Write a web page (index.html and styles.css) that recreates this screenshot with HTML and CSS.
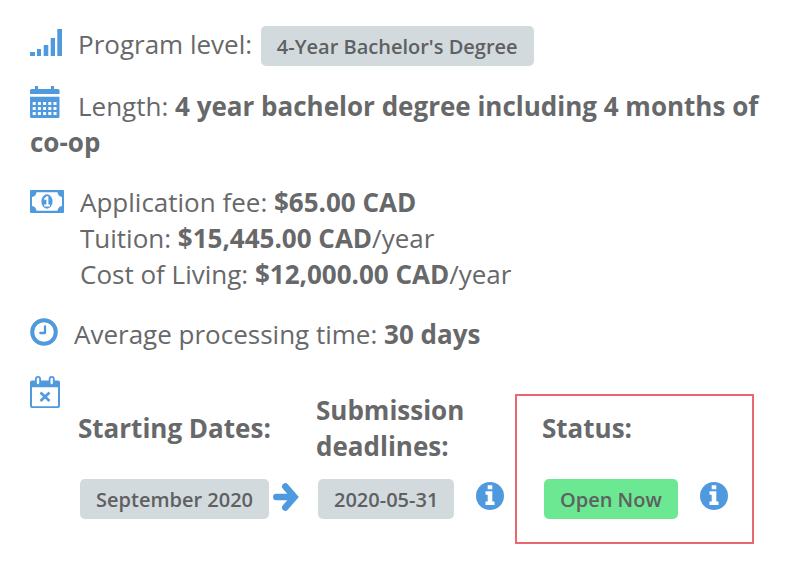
FILE: index.html
```
<!DOCTYPE html>
<html lang="en">
<head>
    <meta charset="UTF-8">
    <meta name="viewport" content="width=device-width, initial-scale=1.0">
    <title>Program Details</title>
    <link rel="stylesheet" href="styles.css">
</head>
<body>
    <!-- Shared icon -->
    <svg class="sprite" aria-hidden="true">
        <symbol id="icon-info" viewBox="0 0 28 28">
            <circle cx="14" cy="14" r="14" fill="#4f9adf"/>
            <path fill="#fff" d="M11.7 3.3h4.6v4h-4.6zM9.5 9.3h6.8v10.2h2.2v3.4h-9v-3.4h2.2v-6.8H9.5z"/>
        </symbol>
    </svg>

    <main class="program">
        <!-- Program level -->
        <p class="detail">
            <svg class="icon icon-signal" viewBox="0 0 32 27" aria-hidden="true">
                <path d="M0 23h5v4H0zM7 20h4v7H7zM13.7 16h4.6v11h-4.6zM20.7 9H25v18h-4.300zM27.300 0H32v27h-4.700z"/>
            </svg>Program level: <span class="badge badge-level">4-Year Bachelor's Degree</span>
        </p>

        <!-- Length -->
        <p class="detail">
            <svg class="icon icon-calendar" viewBox="0 0 30 32" aria-hidden="true">
                <path fill-rule="evenodd" d="M5 0h3v3h13V0h3v3h4q1.500 0 1.500 1.500V8H0V4.500Q0 3 1.500 3H5zM0 10.700h29.500V30.500q0 1.500-1.500 1.500H1.500Q0 32 0 30.500zM2.700 16v3h3v-3zm5.200 0v3h3v-3zm5.200 0v3h3v-3zm5.200 0v3h3v-3zm5.200 0v3h3v-3zM2.700 21v3h3v-3zm5.200 0v3h3v-3zm5.200 0v3h3v-3zm5.200 0v3h3v-3zm5.200 0v3h3v-3zM2.700 26v3h3v-3zm5.200 0v3h3v-3zm5.200 0v3h3v-3zm5.200 0v3h3v-3zm5.200 0v3h3v-3z"/>
            </svg>Length: <strong>4 year bachelor degree including 4 months of co-op</strong>
        </p>

        <!-- Costs -->
        <div class="detail costs">
            <svg class="icon icon-money" viewBox="0 0 34 23" aria-hidden="true">
                <path fill-rule="evenodd" d="M1 0h32q1 0 1 1v21q0 1-1 1H1q-1 0-1-1V1q0-1 1-1zM6.500 2.300Q6 6.300 2 7v9q4 .700 4.500 4.700h21Q28 16.700 32 16V7q-4-.700-4.500-4.700z"/>
                <ellipse cx="17" cy="11.500" rx="5.600" ry="7.200"/>
                <path fill="none" stroke="#fff" stroke-width="2" d="M14.300 9.400Q16.500 8.600 17.400 6.500V15.500M14.200 15.500H20"/>
            </svg>
            <div>
                <div>Application fee: <strong>$65.00 CAD</strong></div>
                <div>Tuition: <strong>$15,445.00 CAD</strong>/year</div>
                <div>Cost of Living: <strong>$12,000.00 CAD</strong>/year</div>
            </div>
        </div>

        <!-- Processing time -->
        <p class="detail">
            <svg class="icon icon-clock" viewBox="0 0 28 28" aria-hidden="true">
                <circle cx="14" cy="14" r="11.800" fill="none" stroke="#4f9adf" stroke-width="4"/>
                <path fill="none" stroke="#4f9adf" stroke-width="2.300" stroke-linecap="round" stroke-linejoin="round" d="M15 8.500V15H10.300"/>
            </svg>Average processing time: <strong>30 days</strong>
        </p>

        <!-- Intakes -->
        <div class="intakes">
            <svg class="icon icon-deadline" viewBox="0 0 30 32" aria-hidden="true">
                <path fill-rule="evenodd" d="M2 4.500h26q2 0 2 2V30q0 2-2 2H2q-2 0-2-2V6.500q0-2 2-2zM2 11.300V29.500q0 .800.800.800h24.400q.800 0 .800-.800V11.300z"/>
                <path stroke="#4f9adf" stroke-width="6" stroke-linecap="round" d="M8 3v4M21.700 3v4"/>
                <path stroke="#fff" stroke-width="2.400" stroke-linecap="round" d="M8 3v4M21.700 3v4"/>
                <path fill="none" stroke="#4f9adf" stroke-width="2.600" d="M10.500 16.500l9 8.500M19.500 16.500l-9 8.500"/>
            </svg>
            <div class="table-wrap">
                <table class="dates">
                    <thead>
                        <tr>
                            <th class="col-start" scope="col">Starting Dates:</th>
                            <th class="col-deadline" scope="col">Submission deadlines:</th>
                            <th class="col-status" scope="col">Status:</th>
                        </tr>
                    </thead>
                    <tbody>
                        <tr>
                            <td>
                                <div class="cell">
                                    <span class="badge">September 2020</span>
                                    <svg class="arrow" viewBox="0 0 26 28" aria-hidden="true">
                                        <path fill="none" stroke="#4f9adf" stroke-width="6.500" stroke-linecap="round" d="M3.300 14h17"/>
                                        <path fill="none" stroke="#4f9adf" stroke-width="6.500" stroke-linecap="round" d="M12.300 3.500L21.500 14l-9.200 10.500"/>
                                    </svg>
                                </div>
                            </td>
                            <td>
                                <div class="cell">
                                    <span class="badge">2020-05-31</span>
                                    <button class="info" type="button" aria-label="Deadline information"><svg viewBox="0 0 28 28"><use href="#icon-info"/></svg></button>
                                </div>
                            </td>
                            <td class="col-status">
                                <div class="cell">
                                    <span class="badge badge-open">Open Now</span>
                                    <button class="info" type="button" aria-label="Status information"><svg viewBox="0 0 28 28"><use href="#icon-info"/></svg></button>
                                </div>
                            </td>
                        </tr>
                    </tbody>
                </table>
                <div class="highlight"></div>
            </div>
        </div>
    </main>
</body>
</html>
```

FILE: styles.css
```
:root {
    --text: #67686a;
    --blue: #4f9adf;
    --badge: #d2dade;
    --green: #6be891;
    --red: #ee6572;
}

/* General Reset */
* {
    margin: 0;
    padding: 0;
    box-sizing: border-box;
}

body {
    font-family: "Open Sans", "Noto Sans", sans-serif;
    font-size: 26px;
    line-height: 36px;
    color: var(--text);
    background-color: #fff;
}

.sprite {
    position: absolute;
    width: 0;
    height: 0;
}

.program {
    padding: 26px 30px 16px;
}

.detail {
    margin-bottom: 24px;
}

strong,
th {
    font-weight: 700;
}

/* Icons */
.icon {
    flex-shrink: 0;
    fill: var(--blue);
    vertical-align: -2px;
}

.icon-signal {
    width: 32px;
    height: 27px;
    margin-right: 16px;
}

.icon-calendar {
    width: 30px;
    height: 32px;
    margin-top: -6px;
    margin-right: 18px;
}

.icon-money {
    width: 34px;
    height: 23px;
    margin-top: 6px;
}

.icon-clock {
    width: 28px;
    height: 28px;
    margin-top: -4px;
    margin-right: 16px;
}

.icon-deadline {
    width: 30px;
    height: 32px;
}

/* Badges */
.badge {
    display: inline-block;
    padding: 2px 16px 0;
    font-size: 20px;
    font-weight: 600;
    line-height: 38px;
    color: #5f6061;
    background-color: var(--badge);
    border-radius: 5px;
    white-space: nowrap;
}

.badge-level {
    margin-left: 2px;
    margin-bottom: -2px;
}

.badge-open {
    background-color: var(--green);
}

/* Costs */
.costs {
    display: flex;
    gap: 16px;
}

/* Intakes */
.intakes {
    display: flex;
    gap: 18px;
}

.table-wrap {
    position: relative;
    flex: 1;
    margin-top: 16px;
    margin-right: 9px;
    padding-bottom: 25px;
}

.dates {
    width: 100%;
    table-layout: fixed;
    border-collapse: collapse;
}

.dates th {
    text-align: left;
    vertical-align: middle;
}

.col-start {
    width: 238px;
}

.col-deadline {
    width: 200px;
    padding-right: 32px;
}

.col-status {
    padding-left: 26px;
}

.cell {
    display: flex;
    align-items: center;
    padding: 15px 0 0 2px;
}

.arrow {
    width: 26px;
    height: 28px;
    margin-left: 4px;
    margin-bottom: 4px;
}

.info {
    width: 28px;
    height: 28px;
    margin-left: 22px;
    margin-bottom: 6px;
    border: none;
    background: none;
    cursor: pointer;
}

.info svg {
    display: block;
    width: 100%;
    height: 100%;
}

/* Frame round the status column */
.highlight {
    position: absolute;
    top: 2px;
    right: 0;
    bottom: 0;
    width: 239px;
    border: 2px solid var(--red);
    pointer-events: none;
}
```
